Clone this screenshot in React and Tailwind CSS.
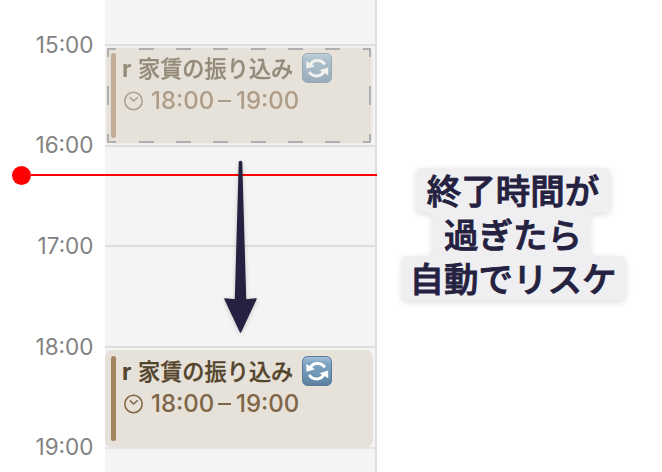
import React from "react";

const jp = "font-['Inter','Noto_Sans_CJK_JP',sans-serif]";

function RepeatIcon({ id }) {
  return (
    <svg className="h-[30px] w-[30px] shrink-0" viewBox="0 0 30 30">
      <defs>
        <linearGradient id={id} x1="0" y1="0" x2="0" y2="1">
          <stop offset="0" stopColor="#a9c5da" />
          <stop offset="0.22" stopColor="#80a5c4" />
          <stop offset="0.6" stopColor="#7096b6" />
          <stop offset="1" stopColor="#5b7e9d" />
        </linearGradient>
      </defs>
      <rect x="0.5" y="0.5" width="29" height="29" rx="5" fill={`url(#${id})`} stroke="#587b98" />
      <path d="M8.4 12.2C10 6.6 18.8 5.6 22.8 11.4" fill="none" stroke="#fff" strokeWidth="3" />
      <path d="M4.4 8V15.8L13 13.2Z" fill="#fff" />
      <path d="M21.6 18.2C20 24 11.2 24.8 7.2 19" fill="none" stroke="#fff" strokeWidth="3" />
      <path d="M26.2 14.4V22.2L17.4 17.2Z" fill="#fff" />
    </svg>
  );
}

function EventBody({ id }) {
  return (
    <>
      <div className="h-[85px] w-[5px] shrink-0 rounded-full bg-[#a4845e]" />
      <div className="ml-[6px]">
        <div className="flex h-[30px] items-center text-[#54452c]">
          <span className="w-[16px] pt-[2px] text-[23px] font-bold leading-[30px]">r</span>
          <span className="w-[164px] whitespace-nowrap pt-[2px] text-[22.2px] font-medium leading-[30px] [-webkit-text-stroke:0.3px_currentColor]">
            家賃の振り込み
          </span>
          <RepeatIcon id={id} />
        </div>
        <div className="flex h-[35px] items-center text-[#806648]">
          <svg className="ml-[1px] h-5 w-5" viewBox="0 0 20 20" fill="none" stroke="currentColor" strokeWidth="1.5">
            <circle cx="10.5" cy="10" r="8.7" />
            <path d="M6.9 6.4L10.5 10L14.9 6.2" />
          </svg>
          <span className="ml-[8px] flex items-center whitespace-nowrap text-[24px] font-medium leading-[34px]">
            <span className="w-[67px]">18:00</span>
            <span className="mr-[5px] h-[2px] w-[13px] bg-current" />
            <span>19:00</span>
          </span>
        </div>
      </div>
    </>
  );
}

function GhostEvent() {
  return (
    <div className="relative h-[97px] w-[268px] rounded-md bg-[#eeece8]">
      <div className="ml-[2px] flex h-[95px] w-[264px] translate-y-px bg-[#e6e1d9] pl-[4px] pt-[5px]">
        <div className="flex opacity-55">
          <EventBody id="ghost" />
        </div>
      </div>
      <svg className="absolute left-[2px] top-px h-[95px] w-[265px]" viewBox="0 0 265 95" fill="none" stroke="#afafb2" strokeWidth="2">
        <path d="M1 9V1H9M256 1H263V9M263 86V94H256M9 94H1V86" />
        <path d="M32 1H47M69 1H84M106 1H121M144 1H159M181 1H196M218 1H233" />
        <path d="M32 94H47M69 94H84M106 94H121M144 94H159M181 94H196M218 94H233" />
        <path d="M1 38V57M263 38V57" />
      </svg>
    </div>
  );
}

function Event() {
  return (
    <div className="flex h-[97px] w-[268px] rounded-[7px] bg-[#e6e1d9] pl-[6px] pt-[6px]">
      <EventBody id="event" />
    </div>
  );
}

function Annotation() {
  return (
    <div className="relative ml-[25px] mt-[168px] h-[134px] w-[224px]">
      <svg
        className="absolute inset-0 h-full w-full overflow-visible drop-shadow-[0_2px_3px_rgba(0,0,0,0.13)]"
        viewBox="0 0 224 134"
        fill="#efeff2"
      >
        <path d="M20.5 0H202.5Q208.5 0 208.5 6V38.5Q208.5 44.5 202.5 44.5H194Q188 44.5 188 50.5V82Q188 88 194 88H218Q224 88 224 94V126.5Q224 132.5 218 132.5H6Q0 132.5 0 126.5V94Q0 88 6 88H24.5Q30.5 88 30.5 82V50.5Q30.5 44.5 24.5 44.5H20.5Q14.5 44.5 14.5 38.5V6Q14.5 0 20.5 0Z" />
      </svg>
      <div className="relative left-[-1px] top-[2px] flex flex-col items-center whitespace-nowrap text-[34.5px] font-medium leading-[44px] text-[#252140] [-webkit-text-stroke:0.9px_currentColor]">
        <span>終了時間が</span>
        <span>過ぎたら</span>
        <span>自動でリスケ</span>
      </div>
    </div>
  );
}

const hours = ["15:00", "16:00", "17:00", "18:00", "19:00"];

export default function App() {
  return (
    <div className={`relative flex h-[472px] w-[662px] overflow-hidden bg-white ${jp}`}>
      <div className="flex w-[105px] shrink-0 flex-col pr-[11.5px] pt-[28.5px] text-right text-[22.5px] text-[#828282]">
        {hours.map((h) => (
          <div key={h} className="h-[100.7px] shrink-0 leading-[32px]">{h}</div>
        ))}
      </div>
      <div className="h-[472px] w-[272px] shrink-0 border-r-2 border-[#dedede] bg-[#f4f4f4] pt-[44px]">
        <div className="h-[101px] border-t-2 border-[#dedede] pt-px">
          <GhostEvent />
        </div>
        <div className="h-[100px] border-t-2 border-[#dedede]" />
        <div className="h-[101px] border-t-2 border-[#dedede]" />
        <div className="h-[101px] border-t-2 border-[#dedede] pt-[2px]">
          <Event />
        </div>
        <div className="border-t-2 border-[#e5e5e5]" />
      </div>
      <Annotation />

      <div className="absolute left-[11.5px] top-[165px] flex h-[20px] w-[365px] items-center">
        <div className="h-[19px] w-[19px] rounded-full bg-[#ff0000]" />
        <div className="h-[2px] flex-1 bg-[#ff0000]" />
      </div>
      <svg
        className="absolute left-[220px] top-[158px] h-[180px] w-[42px] drop-shadow-[0_1px_2px_rgba(0,0,0,0.2)]"
        viewBox="0 0 42 180"
        fill="#252140"
        stroke="#252140"
        strokeLinejoin="round"
        strokeWidth="1.5"
      >
        <path d="M19.5 4Q20.5 3 21.5 4L25.5 142L36 141L20.5 174L5 141L15.5 142Z" />
      </svg>
    </div>
  );
}
